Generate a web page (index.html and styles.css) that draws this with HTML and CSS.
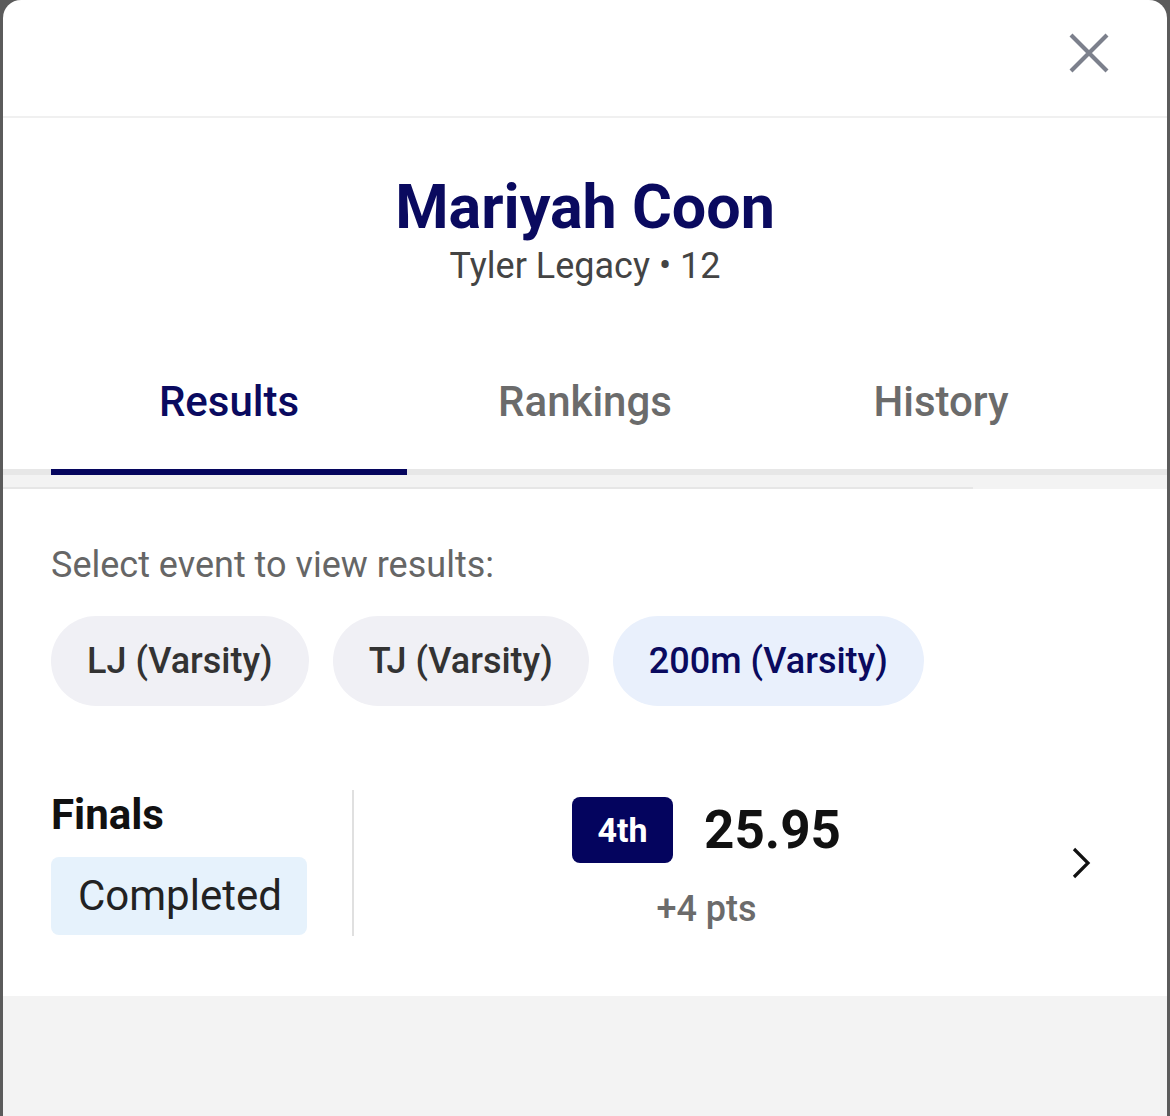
FILE: index.html
```html
<!DOCTYPE html>
<html>
<head>
<meta charset="utf-8">
<link rel="stylesheet" href="styles.css">
</head>
<body>
<div class="modal">
  <div class="topbar">
    <button class="close" aria-label="Close">
      <svg width="44" height="44" viewBox="0 0 44 44"><path d="M4 4 L40 40 M40 4 L4 40" stroke="#7c808c" stroke-width="4.2" stroke-linecap="butt" fill="none"/></svg>
    </button>
  </div>
  <div class="profile">
    <h1 class="name">Mariyah Coon</h1>
    <div class="sub">Tyler Legacy • 12</div>
  </div>
  <div class="tabs">
    <div class="tab active">Results</div>
    <div class="tab">Rankings</div>
    <div class="tab">History</div>
  </div>
  <div class="tabbar"></div>
  <div class="tabshade"><div class="shadeline"></div></div>
  <div class="content">
    <div class="prompt">Select event to view results:</div>
    <div class="chips">
      <div class="chip">LJ (Varsity)</div>
      <div class="chip">TJ (Varsity)</div>
      <div class="chip active">200m (Varsity)</div>
    </div>
    <div class="result">
      <div class="round">
        <div class="round-name">Finals</div>
        <div class="status">Completed</div>
      </div>
      <div class="divider"></div>
      <div class="perf">
        <div class="perf-top">
          <div class="place">4th</div>
          <div class="mark">25.95</div>
        </div>
        <div class="pts">+4 pts</div>
      </div>
      <div class="chev">
        <svg width="24" height="34" viewBox="0 0 24 34"><path d="M5 3 L19 17 L5 31" stroke="#111" stroke-width="3.2" fill="none"/></svg>
      </div>
    </div>
  </div>
  <div class="footer"></div>
</div>
</body>
</html>
```
FILE: styles.css
```css
* { box-sizing: border-box; }
html, body { margin: 0; padding: 0; }
body {
  background: #5b5b5b;
  font-family: Roboto, "Noto Sans", sans-serif;
  width: 1170px;
  height: 1116px;
  overflow: hidden;
}
.modal {
  margin: 0 3px;
  height: 1116px;
  background: #fff;
  border-radius: 18px 18px 0 0;
  display: flex;
  flex-direction: column;
  overflow: hidden;
}
.topbar {
  height: 118px;
  border-bottom: 2px solid #f0f0f0;
  display: flex;
  justify-content: flex-end;
  align-items: flex-start;
  padding: 31px 56px 0 0;
  flex: none;
}
.close {
  border: 0;
  background: none;
  padding: 0;
  width: 44px;
  height: 44px;
  display: block;
}
.close svg { display: block; }
.profile {
  text-align: center;
  padding-top: 54px;
  flex: none;
}
.name {
  margin: 0;
  font-size: 61px;
  font-weight: 700;
  color: #0a0a5f;
  line-height: 70px;
}
.sub {
  font-size: 36px;
  color: #444;
  line-height: 42px;
  margin-top: 3px;
}
.tabs {
  display: flex;
  padding: 0 48px;
  margin-top: 89px;
  flex: none;
}
.tab {
  width: 356px;
  text-align: center;
  font-size: 42px;
  font-weight: 500;
  color: #6b6b6b;
  height: 93px;
  line-height: 52px;
  position: relative;
}
.tab.active { color: #0a0a5f; }
.tab.active::after {
  content: "";
  position: absolute;
  left: 0;
  right: 0;
  bottom: -6px;
  height: 6px;
  background: #06065e;
  z-index: 1;
}
.tabbar {
  height: 6px;
  background: #e7e7e7;
  flex: none;
}
.tabshade {
  height: 14px;
  background: #f3f3f3;
  flex: none;
  position: relative;
}
.shadeline {
  position: absolute;
  left: 0;
  bottom: 0;
  width: 970px;
  height: 2px;
  background: #e6e6e6;
}
.content {
  background: #fff;
  padding: 56px 48px 0;
  height: 507px;
  flex: none;
}
.prompt {
  font-size: 36px;
  color: #666;
  line-height: 40px;
}
.chips {
  display: flex;
  gap: 24px;
  margin-top: 31px;
}
.chip {
  height: 90px;
  padding: 0 36px;
  border-radius: 45px;
  background: #f0f0f5;
  font-size: 36px;
  font-weight: 500;
  color: #333;
  display: flex;
  align-items: center;
}
.chip.active {
  background: #e9f0fc;
  color: #0a0a5f;
}
.result {
  display: flex;
  align-items: center;
  margin-top: 84px;
}
.round {
  width: 300px;
}
.round-name {
  font-size: 42px;
  font-weight: 700;
  color: #111;
  line-height: 48px;
}
.status {
  display: inline-block;
  margin-top: 18px;
  background: #e6f2fc;
  border-radius: 8px;
  padding: 0 25px 0 27px;
  height: 78px;
  line-height: 78px;
  font-size: 42px;
  color: #222;
}
.divider {
  width: 2px;
  height: 146px;
  background: #e0e0e0;
  margin-left: 1px;
}
.perf {
  flex: 1;
  display: flex;
  flex-direction: column;
  align-items: center;
}
.perf-top {
  display: flex;
  align-items: center;
  gap: 31px;
}
.place {
  background: #04045e;
  color: #fff;
  font-size: 34px;
  font-weight: 700;
  width: 101px;
  height: 66px;
  line-height: 66px;
  text-align: center;
  border-radius: 8px;
}
.mark {
  font-size: 53px;
  font-weight: 700;
  color: #111;
  line-height: 64px;
}
.pts {
  font-size: 36px;
  font-weight: 500;
  color: #6b6b6b;
  margin-top: 26px;
  line-height: 40px;
}
.chev {
  width: 60px;
  display: flex;
  justify-content: flex-start;
  padding-left: 10px;
}
.chev svg { display: block; }
.footer {
  flex: 1;
  background: #f3f3f3;
}
```
